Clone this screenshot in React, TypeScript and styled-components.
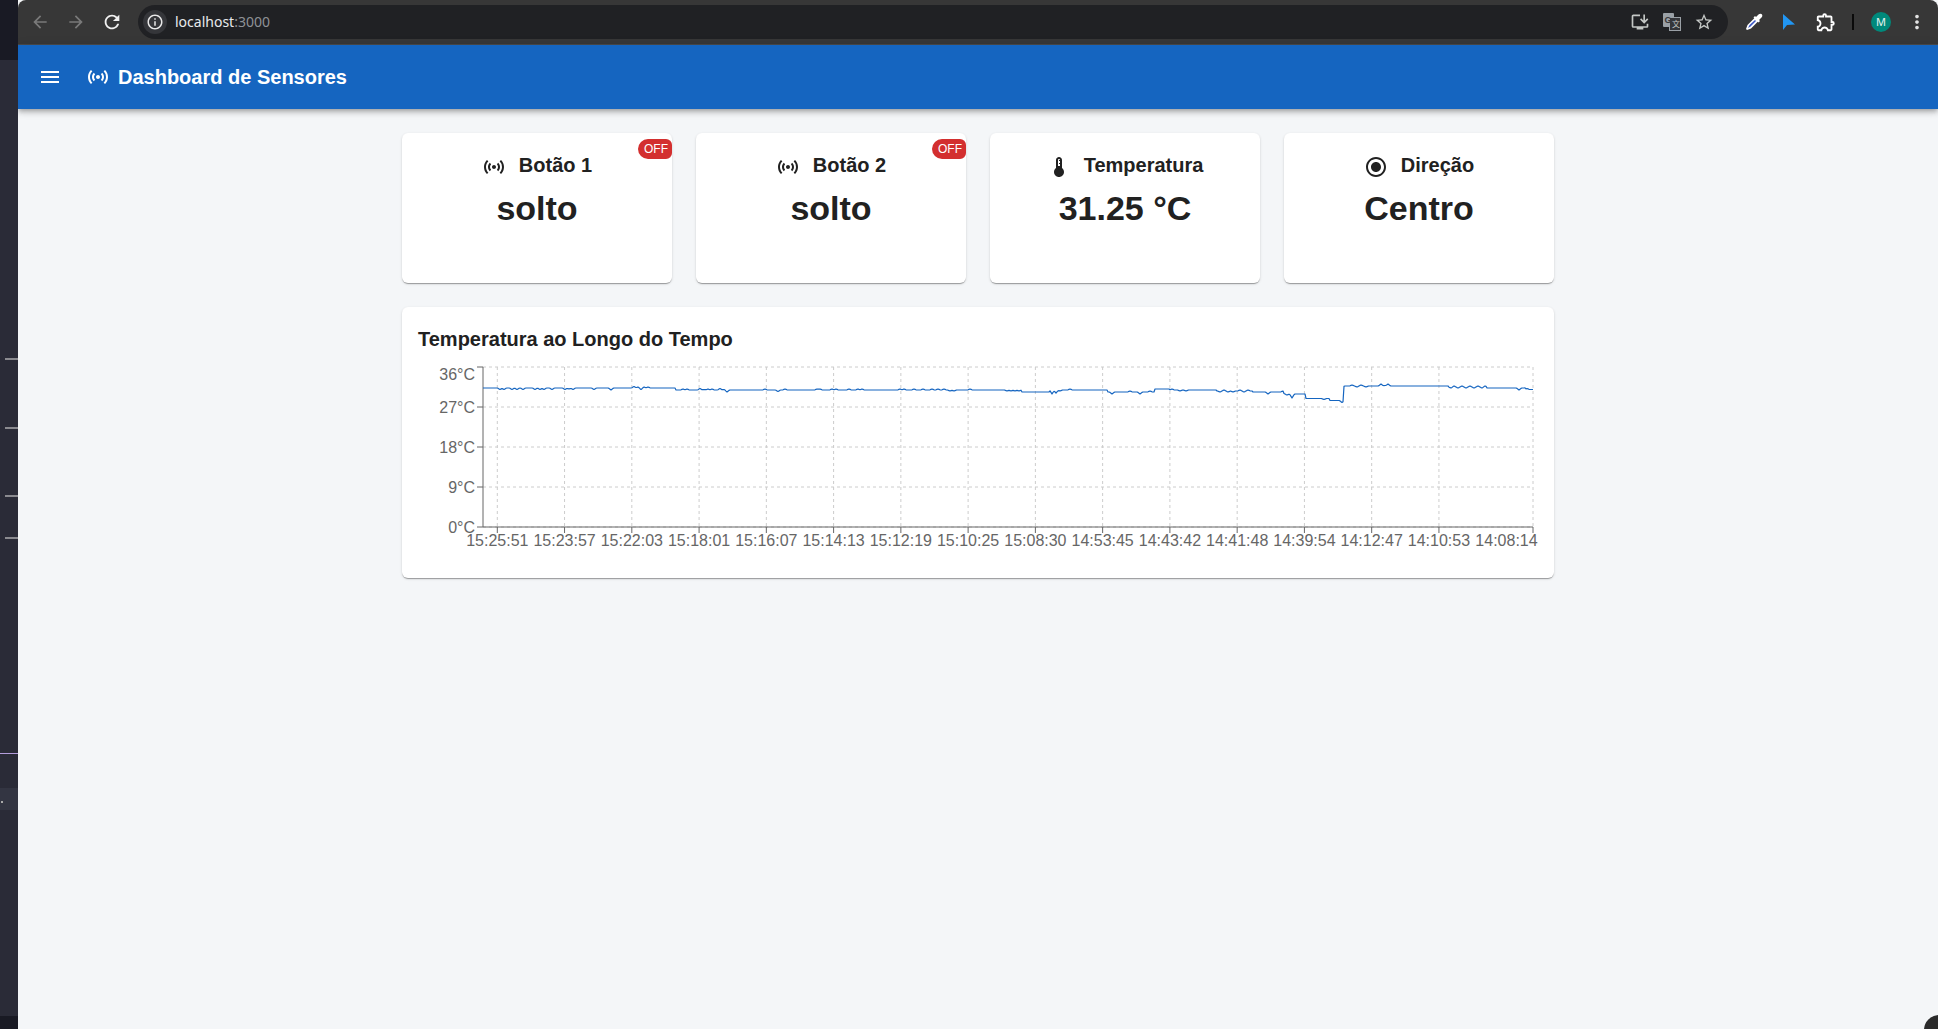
import styled, {createGlobalStyle} from "styled-components";
import {
    MdArrowBack,
    MdArrowForward,
    MdDeviceThermostat,
    MdInfoOutline,
    MdInstallDesktop,
    MdMenu,
    MdMoreVert,
    MdOutlineExtension,
    MdRadioButtonChecked,
    MdRefresh,
    MdSensors,
    MdStarBorder,
} from "react-icons/md";
import type {ReactNode} from "react";

const GlobalStyle = createGlobalStyle`
  html, body {
    margin: 0;
    padding: 0;
    height: 100%;
    overflow: hidden;
    background: #191a24;
    font-family: "Liberation Sans", Arial, sans-serif;
  }
`

// chart data, in page pixels (the svg viewBox starts at the chart's page position)
const CHART_X = 418;
const CHART_Y = 362;
const PLOT_LEFT = 483;
const PLOT_RIGHT = 1533;
const PLOT_TOP = 367;
const PLOT_BOTTOM = 527;

const yTicks = [
    {label: "36°C", y: 367, textY: 380},
    {label: "27°C", y: 407, textY: 413},
    {label: "18°C", y: 447, textY: 453},
    {label: "9°C", y: 487, textY: 493},
    {label: "0°C", y: 527, textY: 533},
];

const xLabels = [
    "15:25:51", "15:23:57", "15:22:03", "15:18:01", "15:16:07", "15:14:13", "15:12:19", "15:10:25",
    "15:08:30", "14:53:45", "14:43:42", "14:41:48", "14:39:54", "14:12:47", "14:10:53",
];

const levels: [number, number][] = [
    [483, 388], [676, 390], [1022, 392], [1050, 390], [1108, 392], [1155, 389], [1170, 390], [1217, 391],
    [1253, 392], [1284, 394], [1306, 398.5], [1330, 400.5], [1344, 386], [1449, 387], [1487, 388], [1526, 389.5],
];

const bumps: Record<number, number> = {
    500: 1.5, 504: 1.5, 512: 1.5, 517: 1.5, 523: 1.5, 535: 1.5, 540: 1.5, 544: 1.5, 552: 1.5,
    565: 1.5, 569: 1, 573: 1.5, 594: 1.5, 611: 2,
    634: -1.5, 638: -1, 641: 1.5, 644: -1, 648: -1,
    683: -1, 687: -1, 700: -1.5, 704: -.5, 708: -1, 712: -1, 720: -1.5, 724: -.5, 727: 2,
    765: -1, 778: 1.5, 785: -1,
    817: -1, 820: -1, 832: -1, 836: -1, 849: -1, 858: -1, 862: -1,
    900: -1, 904: -1, 914: -1, 923: -1, 932: -1, 938: -1, 944: -1, 950: 1, 954: 1, 970: -1,
    1007: 1, 1011: 1, 1015: 1, 1019: 1, 1052: 4, 1056: 3, 1060: 1, 1070: -1,
    1112: 2, 1130: -1, 1140: 2, 1150: -1,
    1172: -1, 1180: 1, 1186: 1,
    1220: 1, 1224: -1, 1228: 1, 1233: 1, 1240: -1, 1244: 1, 1248: -1,
    1268: 2, 1283: -1, 1287: 1, 1292: 4,
    1324: 1, 1342: 2,
    1352: -1, 1357: 1, 1361: -1, 1366: 1, 1381: -2, 1385: -.5, 1388: -2,
    1451: 1, 1454: -1, 1458: 1, 1462: -1, 1466: 1, 1470: -1, 1474: 1, 1478: -1, 1482: 1, 1485: -1,
    1519: 2, 1527: -1,
};

function bumpAt(x: number) {
    let total = 0;
    for (const key of Object.keys(bumps)) {
        const distance = Math.abs(x - Number(key));
        if (distance < 2.5) total += bumps[Number(key)] * (1 - distance / 2.5);
    }
    return total;
}

function buildLine() {
    const points: string[] = [];
    for (let x = PLOT_LEFT; x <= PLOT_RIGHT; x++) {
        let level = levels[0][1];
        for (const [from, y] of levels) {
            if (x >= from) level = y;
        }
        points.push(`${x},${level + bumpAt(x)}`);
    }
    return points.join(" ");
}

const sideMarks = [358, 427, 495, 537];

const SideStrip = () => (
    <StyledSide>
        <StyledSideTop/>
        {sideMarks.map((top, index) => (
            <StyledSideMark key={top} $gap={top - (index === 0 ? 60 : sideMarks[index - 1] + 2)}/>
        ))}
        <StyledSidePurple/>
        <StyledSideBand><StyledSideDot/></StyledSideBand>
        <StyledSideBottom/>
    </StyledSide>
);

const BrowserBar = () => (
    <StyledChrome>
        <StyledNav>
            <StyledNavBtn $dim><MdArrowBack size={20}/></StyledNavBtn>
            <StyledNavBtn $dim><MdArrowForward size={20}/></StyledNavBtn>
            <StyledNavBtn><MdRefresh size={22}/></StyledNavBtn>
        </StyledNav>
        <StyledUrlBar>
            <StyledInfo><MdInfoOutline size={18}/></StyledInfo>
            <StyledUrl>localhost<span>:3000</span></StyledUrl>
            <StyledUrlIcons>
                <MdInstallDesktop size={20}/>
                <svg width="20" height="20" viewBox="0 0 20 20">
                    <rect x="1" y="1" width="11" height="14" rx="1" fill="#9aa0a6"/>
                    <rect x="7.5" y="5.5" width="11" height="13" fill="#35363a" stroke="#9aa0a6"/>
                    <text x="2.5" y="11" fontSize="9" fontWeight="700" fill="#35363a" fontFamily="Liberation Sans">G</text>
                    <text x="10" y="15" fontSize="8" fill="#c4c7c5" fontFamily="Noto Sans CJK SC">文</text>
                </svg>
                <MdStarBorder size={20}/>
            </StyledUrlIcons>
        </StyledUrlBar>
        <StyledTools>
            <svg width="20" height="20" viewBox="0 0 20 20">
                <path d="M3 18l-1-1 1.500-4L11 5.500l3.500 3.500L7 16.500z" fill="#fff"/>
                <path d="M4 16l1.500-3L11 8l1 1-5.500 5.500z" fill="#3b57c4"/>
                <path d="M11 4l1 1 2.500-2.500c1-1 3-1 3.500 0s.5 2-.5 3L15 8l1 1-1.500 1.500-5-5z" fill="#fff"/>
            </svg>
            <StyledCursorIcon width="14" height="18" viewBox="0 0 14 18">
                <path d="M1 1l12 10.500-8 .5-4 5z" fill="#2196f3"/>
            </StyledCursorIcon>
            <MdOutlineExtension size={22} color="#fff"/>
            <StyledDivider/>
            <StyledAvatar>M</StyledAvatar>
            <MdMoreVert size={22} color="#e3e3e3"/>
        </StyledTools>
    </StyledChrome>
);

type SensorCardProps = {
    icon: ReactNode;
    title: string;
    value: string;
    badge?: string;
}

const SensorCard = ({icon, title, value, badge}: SensorCardProps) => (
    <StyledCard>
        {badge && <StyledBadge>{badge}</StyledBadge>}
        <StyledCardHeader>
            {icon}
            <StyledCardTitle>{title}</StyledCardTitle>
        </StyledCardHeader>
        <StyledCardValue>{value}</StyledCardValue>
    </StyledCard>
);

const TemperatureChart = () => (
    <StyledChartCard>
        <StyledChartTitle>Temperatura ao Longo do Tempo</StyledChartTitle>
        <svg width="1120" height="200" viewBox={`${CHART_X} ${CHART_Y} 1120 200`}>
            <g stroke="#ccc" strokeDasharray="3 3" fill="none">
                {yTicks.map(t => <line key={t.y} x1={PLOT_LEFT} x2={PLOT_RIGHT} y1={t.y} y2={t.y}/>)}
                {xLabels.map((_, i) => {
                    const x = 497.3 + i * 67.26;
                    return <line key={i} x1={x} x2={x} y1={PLOT_TOP} y2={PLOT_BOTTOM}/>
                })}
                <line x1={PLOT_RIGHT} x2={PLOT_RIGHT} y1={PLOT_TOP} y2={PLOT_BOTTOM}/>
            </g>
            <g stroke="#666" fill="none">
                <line x1={PLOT_LEFT} x2={PLOT_LEFT} y1={PLOT_TOP} y2={PLOT_BOTTOM}/>
                <line x1={PLOT_LEFT} x2={PLOT_RIGHT} y1={PLOT_BOTTOM} y2={PLOT_BOTTOM}/>
                {yTicks.map(t => <line key={t.y} x1={PLOT_LEFT - 6} x2={PLOT_LEFT} y1={t.y} y2={t.y}/>)}
                {xLabels.map((_, i) => {
                    const x = 497.3 + i * 67.26;
                    return <line key={i} x1={x} x2={x} y1={PLOT_BOTTOM} y2={PLOT_BOTTOM + 6}/>
                })}
                <line x1={PLOT_RIGHT} x2={PLOT_RIGHT} y1={PLOT_BOTTOM} y2={PLOT_BOTTOM + 6}/>
            </g>
            <polyline points={buildLine()} fill="none" stroke="#1565c0" strokeWidth="1.2" strokeLinejoin="round"/>
            <g fill="#666" fontSize="16" fontFamily="Liberation Sans">
                {yTicks.map(t => <text key={t.y} x={475} y={t.textY} textAnchor="end">{t.label}</text>)}
                {xLabels.map((label, i) => (
                    <text key={label} x={497.3 + i * 67.26} y={546} textAnchor="middle">{label}</text>
                ))}
                <text x={1506.5} y={546} textAnchor="middle">14:08:14</text>
            </g>
        </svg>
    </StyledChartCard>
);

export default function App() {
    return (
        <StyledFrame>
            <GlobalStyle/>
            <SideStrip/>
            <StyledWindow>
                <BrowserBar/>
                <StyledAppBar>
                    <StyledMenuBtn><MdMenu size={24}/></StyledMenuBtn>
                    <MdSensors size={24}/>
                    <StyledAppTitle>Dashboard de Sensores</StyledAppTitle>
                </StyledAppBar>
                <StyledContent>
                    <StyledCards>
                        <SensorCard icon={<MdSensors size={24}/>} title="Botão 1" value="solto" badge="OFF"/>
                        <SensorCard icon={<MdSensors size={24}/>} title="Botão 2" value="solto" badge="OFF"/>
                        <SensorCard icon={<MdDeviceThermostat size={24}/>} title="Temperatura" value="31.25 °C"/>
                        <SensorCard icon={<MdRadioButtonChecked size={24}/>} title="Direção" value="Centro"/>
                    </StyledCards>
                    <TemperatureChart/>
                </StyledContent>
                <StyledCornerBlob/>
            </StyledWindow>
        </StyledFrame>
    )
}

const StyledFrame = styled.div`
  display: flex;
  width: 100vw;
  height: 100vh;
  overflow: hidden;
  background: #191a24;
`

const StyledSide = styled.div`
  width: 18px;
  flex: none;
  display: flex;
  flex-direction: column;
  background: #2a2b37;
`

const StyledSideTop = styled.div`
  height: 60px;
  flex: none;
  background: #191a24;
`

const StyledSideMark = styled.div<{ $gap: number }>`
  height: 2px;
  flex: none;
  width: 13px;
  margin: ${props => props.$gap}px 0 0 5px;
  background: #8a8a8f;
`

const StyledSidePurple = styled.div`
  height: 1px;
  flex: none;
  margin-top: 214px;
  background: #b39ddb;
`

const StyledSideBand = styled.div`
  height: 22px;
  flex: none;
  margin-top: 34px;
  padding-top: 13px;
  box-sizing: border-box;
  background: #333542;
`

const StyledSideDot = styled.div`
  width: 2px;
  height: 2px;
  margin-left: 1px;
  background: #aaa;
`

const StyledSideBottom = styled.div`
  height: 13px;
  flex: none;
  margin-top: auto;
  background: #191a24;
`

const StyledWindow = styled.div`
  position: relative;
  flex: 1;
  min-width: 0;
  display: flex;
  flex-direction: column;
  overflow: hidden;
  background: #f4f6f8;
`

const StyledChrome = styled.div`
  height: 45px;
  flex: none;
  box-sizing: border-box;
  display: flex;
  align-items: center;
  padding-bottom: 1px;
  background: #373737;
  border-bottom: 1px solid #4b4b4b;
  border-radius: 8px 8px 0 0;
`

const StyledNav = styled.div`
  width: 120px;
  flex: none;
  display: flex;
  align-items: center;
  padding-left: 4px;
  box-sizing: border-box;
`

const StyledNavBtn = styled.div<{ $dim?: boolean }>`
  width: 36px;
  display: flex;
  justify-content: center;
  color: ${props => props.$dim ? "#7a7a7a" : "#f1f1f1"};
`

const StyledUrlBar = styled.div`
  width: 1590px;
  height: 34px;
  flex: none;
  display: flex;
  align-items: center;
  padding: 0 14px 0 5px;
  box-sizing: border-box;
  border-radius: 17px;
  background: #202124;
`

const StyledInfo = styled.div`
  width: 24px;
  height: 24px;
  display: flex;
  align-items: center;
  justify-content: center;
  border-radius: 50%;
  color: #e8e8e8;
  background: #35363a;
`

const StyledUrl = styled.div`
  margin-left: 8px;
  font-family: "Noto Sans", sans-serif;
  font-size: 14px;
  color: #e8eaed;

  span {
    color: #8e9196;
  }
`

const StyledUrlIcons = styled.div`
  margin-left: auto;
  display: flex;
  align-items: center;
  gap: 12px;
  color: #c4c7c5;
`

const StyledTools = styled.div`
  flex: 1;
  display: flex;
  align-items: center;
  padding-left: 16px;
`

const StyledCursorIcon = styled.svg`
  margin-left: 18px;
  margin-right: 19px;
`

const StyledDivider = styled.div`
  width: 2px;
  height: 16px;
  margin: 0 17px 0 15px;
  background: #0a0a0a;
`

const StyledAvatar = styled.div`
  width: 20px;
  height: 20px;
  margin-right: 15px;
  display: flex;
  align-items: center;
  justify-content: center;
  border-radius: 50%;
  font-family: "Noto Sans", sans-serif;
  font-size: 11px;
  color: #e6f4f1;
  background: #00897b;
`

const StyledAppBar = styled.header`
  position: relative;
  height: 64px;
  flex: none;
  display: flex;
  align-items: center;
  color: #fff;
  background: #1565c0;
  box-shadow: 0 2px 4px -1px rgba(0, 0, 0, .2), 0 4px 5px 0 rgba(0, 0, 0, .14), 0 1px 10px 0 rgba(0, 0, 0, .12);
`

const StyledMenuBtn = styled.div`
  width: 24px;
  height: 24px;
  margin: 0 24px 0 20px;
`

const StyledAppTitle = styled.h1`
  margin: 0 0 0 8px;
  font-size: 20px;
  font-weight: 700;
  line-height: 32px;
`

const StyledContent = styled.main`
  width: 1152px;
  margin: 24px auto 0;
  display: flex;
  flex-direction: column;
  gap: 24px;
`

const StyledCards = styled.div`
  display: grid;
  grid-template-columns: repeat(4, 1fr);
  gap: 24px;
`

const StyledCard = styled.div`
  position: relative;
  min-height: 150px;
  padding-top: 16px;
  box-sizing: border-box;
  overflow: hidden;
  border-radius: 6px;
  color: #212121;
  background: #fff;
  box-shadow: 0 2px 1px -1px rgba(0, 0, 0, .2), 0 1px 1px 0 rgba(0, 0, 0, .14), 0 1px 3px 0 rgba(0, 0, 0, .12);
`

const StyledBadge = styled.div`
  position: absolute;
  top: 6px;
  right: 0;
  width: 34px;
  height: 20px;
  padding-left: 2px;
  box-sizing: border-box;
  display: flex;
  align-items: center;
  justify-content: center;
  border-radius: 10px 6px 6px 10px;
  font-size: 12px;
  color: #fff;
  background: #d32f2f;
`

const StyledCardHeader = styled.div`
  display: flex;
  align-items: center;
  justify-content: center;
  gap: 13px;
  height: 32px;

  svg {
    margin-top: 3px;
  }
`

const StyledCardTitle = styled.h2`
  margin: 0;
  font-size: 20px;
  font-weight: 700;
  line-height: 32px;
`

const StyledCardValue = styled.div`
  margin-top: 6px;
  text-align: center;
  font-size: 34px;
  font-weight: 700;
  line-height: 42px;
`

const StyledChartCard = styled.section`
  padding: 16px;
  border-radius: 6px;
  background: #fff;
  box-shadow: 0 2px 1px -1px rgba(0, 0, 0, .2), 0 1px 1px 0 rgba(0, 0, 0, .14), 0 1px 3px 0 rgba(0, 0, 0, .12);

  svg {
    display: block;
  }
`

const StyledChartTitle = styled.h3`
  margin: 0 0 7px;
  font-size: 20px;
  font-weight: 700;
  line-height: 32px;
  color: #212121;
`

const StyledCornerBlob = styled.div`
  position: absolute;
  right: -16px;
  bottom: -16px;
  width: 30px;
  height: 30px;
  border-radius: 50%;
  background: #2b2b2b;
`
